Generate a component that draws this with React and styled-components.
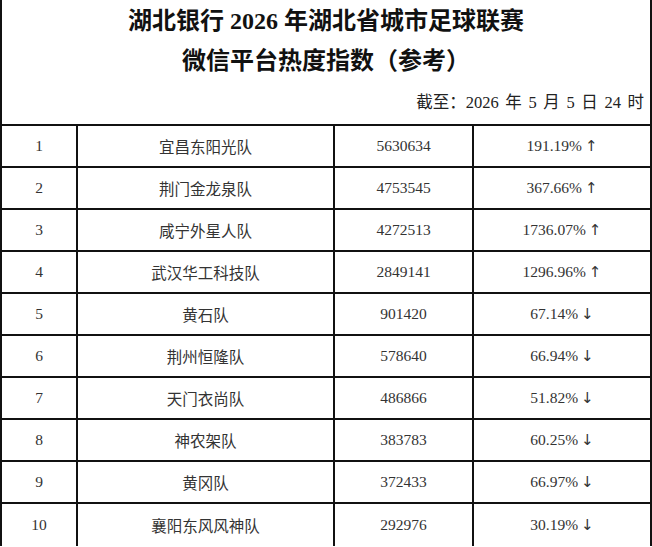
import React from "react";
import styled, { createGlobalStyle } from "styled-components";

const GlobalStyle = createGlobalStyle`
  html, body {
    margin: 0;
    padding: 0;
    background: #fff;
  }
  body {
    font-family: "Liberation Serif", "Noto Sans CJK SC", serif;
  }
`;

const rows = [
  { rank: 1, team: "宜昌东阳光队", index: "5630634", rate: "191.19%", up: true },
  { rank: 2, team: "荆门金龙泉队", index: "4753545", rate: "367.66%", up: true },
  { rank: 3, team: "咸宁外星人队", index: "4272513", rate: "1736.07%", up: true },
  { rank: 4, team: "武汉华工科技队", index: "2849141", rate: "1296.96%", up: true },
  { rank: 5, team: "黄石队", index: "901420", rate: "67.14%", up: false },
  { rank: 6, team: "荆州恒隆队", index: "578640", rate: "66.94%", up: false },
  { rank: 7, team: "天门衣尚队", index: "486866", rate: "51.82%", up: false },
  { rank: 8, team: "神农架队", index: "383783", rate: "60.25%", up: false },
  { rank: 9, team: "黄冈队", index: "372433", rate: "66.97%", up: false },
  { rank: 10, team: "襄阳东风风神队", index: "292976", rate: "30.19%", up: false },
];

const Sheet = styled.div`
  width: 652px;
  box-sizing: border-box;
  border-left: 2px solid #111;
  border-right: 2px solid #111;
`;

const Header = styled.div`
  height: 126px;
  box-sizing: border-box;
  border-bottom: 2px solid #111;
  display: flex;
  flex-direction: column;
`;

const Title = styled.div`
  height: 40px;
  line-height: 42px;
  text-align: center;
  font-size: 24px;
  font-weight: 700;
  color: #111;
`;

const Stamp = styled.div`
  margin-top: auto;
  padding: 0 6px 11px 0;
  text-align: right;
  font-size: 16.5px;
  color: #222;
  word-spacing: 2.5px;
`;

const Row = styled.div`
  display: grid;
  grid-template-columns: 76px 257px 139px 1fr;
  height: 42px;
  box-sizing: border-box;
  border-bottom: 2px solid #111;

  &:last-child {
    border-bottom: none;
  }
`;

const Cell = styled.div`
  display: flex;
  align-items: center;
  justify-content: center;
  font-size: 15.5px;
  color: #333;
  border-right: ${(p) => (p.$last ? "none" : "2px solid #111")};
`;

const Arrow = styled.span`
  margin-left: 3px;
  font-family: "DejaVu Sans", sans-serif;
  font-size: 15px;
  color: #333;
`;

export default function App() {
  return (
    <>
      <GlobalStyle />
      <Sheet>
        <Header>
          <Title>湖北银行 2026 年湖北省城市足球联赛</Title>
          <Title>微信平台热度指数（参考）</Title>
          <Stamp>截至：2026 年 5 月 5 日 24 时</Stamp>
        </Header>
        {rows.map((r) => (
          <Row key={r.rank}>
            <Cell>{r.rank}</Cell>
            <Cell>{r.team}</Cell>
            <Cell>{r.index}</Cell>
            <Cell $last>
              {r.rate}
              <Arrow>{r.up ? "↑" : "↓"}</Arrow>
            </Cell>
          </Row>
        ))}
      </Sheet>
    </>
  );
}
